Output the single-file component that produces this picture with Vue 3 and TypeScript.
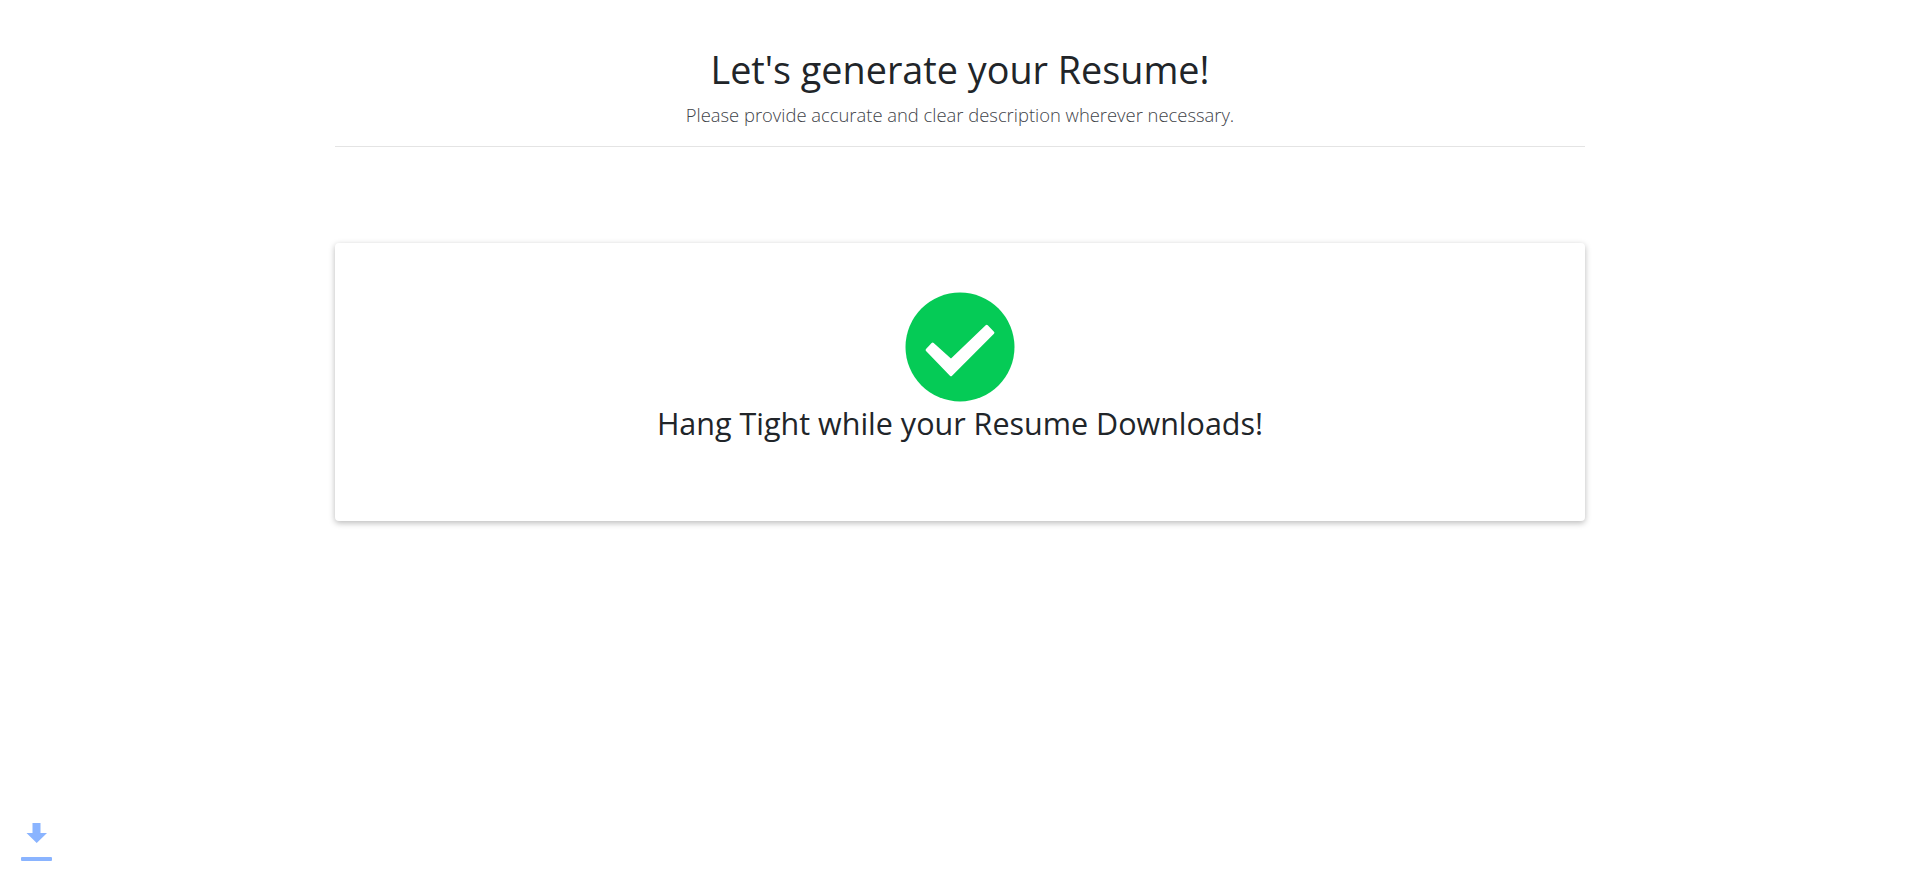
<script setup lang="ts">
const title: string = "Let's generate your Resume!";
</script>

<template>
  <div class="page">
    <main class="container">
      <header class="head">
        <h1 class="title">{{ title }}</h1>
        <p class="lead">Please provide accurate and clear description wherever necessary.</p>
      </header>
      <hr class="rule" />
      <section class="card">
        <svg class="check" viewBox="0 0 110 110" aria-hidden="true">
          <circle cx="55" cy="55" r="54.5" fill="#05cb56" />
          <path d="M22.1 58 27.7 52.1 46 68.6 81.7 34.4 87.9 40.7 46 82.6z" fill="#fff" stroke="#fff" stroke-width="3" stroke-linejoin="round" />
        </svg>
        <h2 class="msg">Hang Tight while your Resume Downloads!</h2>
      </section>
    </main>
    <div class="dl" aria-hidden="true">
      <svg viewBox="0 0 32 40" width="32" height="40">
        <path d="M11.5 0h8v10h6.5L15.7 20 5.5 10h6z" fill="#8ab4ff" />
        <rect x="0" y="34" width="31" height="4" rx="1" fill="#8ab4ff" />
      </svg>
    </div>
  </div>
</template>

<style>
html, body { margin: 0; background: #fff; }
</style>

<style scoped>
.page {
  min-height: 872px;
  position: relative;
  font-family: "Open Sans", "Noto Sans", sans-serif;
  color: #212529;
  overflow: hidden;
}
.container {
  width: 1250px;
  margin: 0 auto;
  padding-top: 44px;
}
.head { text-align: center; }
.title {
  margin: 0;
  font-size: 37.75px;
  font-weight: 400;
  line-height: 52px;
}
.lead {
  margin: 4px 0 0;
  font-size: 18.4px;
  font-weight: 300;
  line-height: 30px;
  color: #3f444a;
}
.rule {
  margin: 16px 0 0;
  border: 0;
  border-top: 1px solid #e4e4e4;
}
.card {
  margin-top: 96px;
  height: 278px;
  box-sizing: border-box;
  padding-top: 49px;
  background: #fff;
  border-radius: 4px;
  box-shadow: 0 2px 6px rgba(0, 0, 0, 0.28);
  text-align: center;
}
.check { display: block; width: 110px; height: 110px; margin: 0 auto; }
.msg {
  margin: 0;
  font-size: 30.5px;
  font-weight: 400;
  line-height: 42px;
}
.dl {
  position: absolute;
  left: 21px;
  top: 823px;
  line-height: 0;
}
</style>
